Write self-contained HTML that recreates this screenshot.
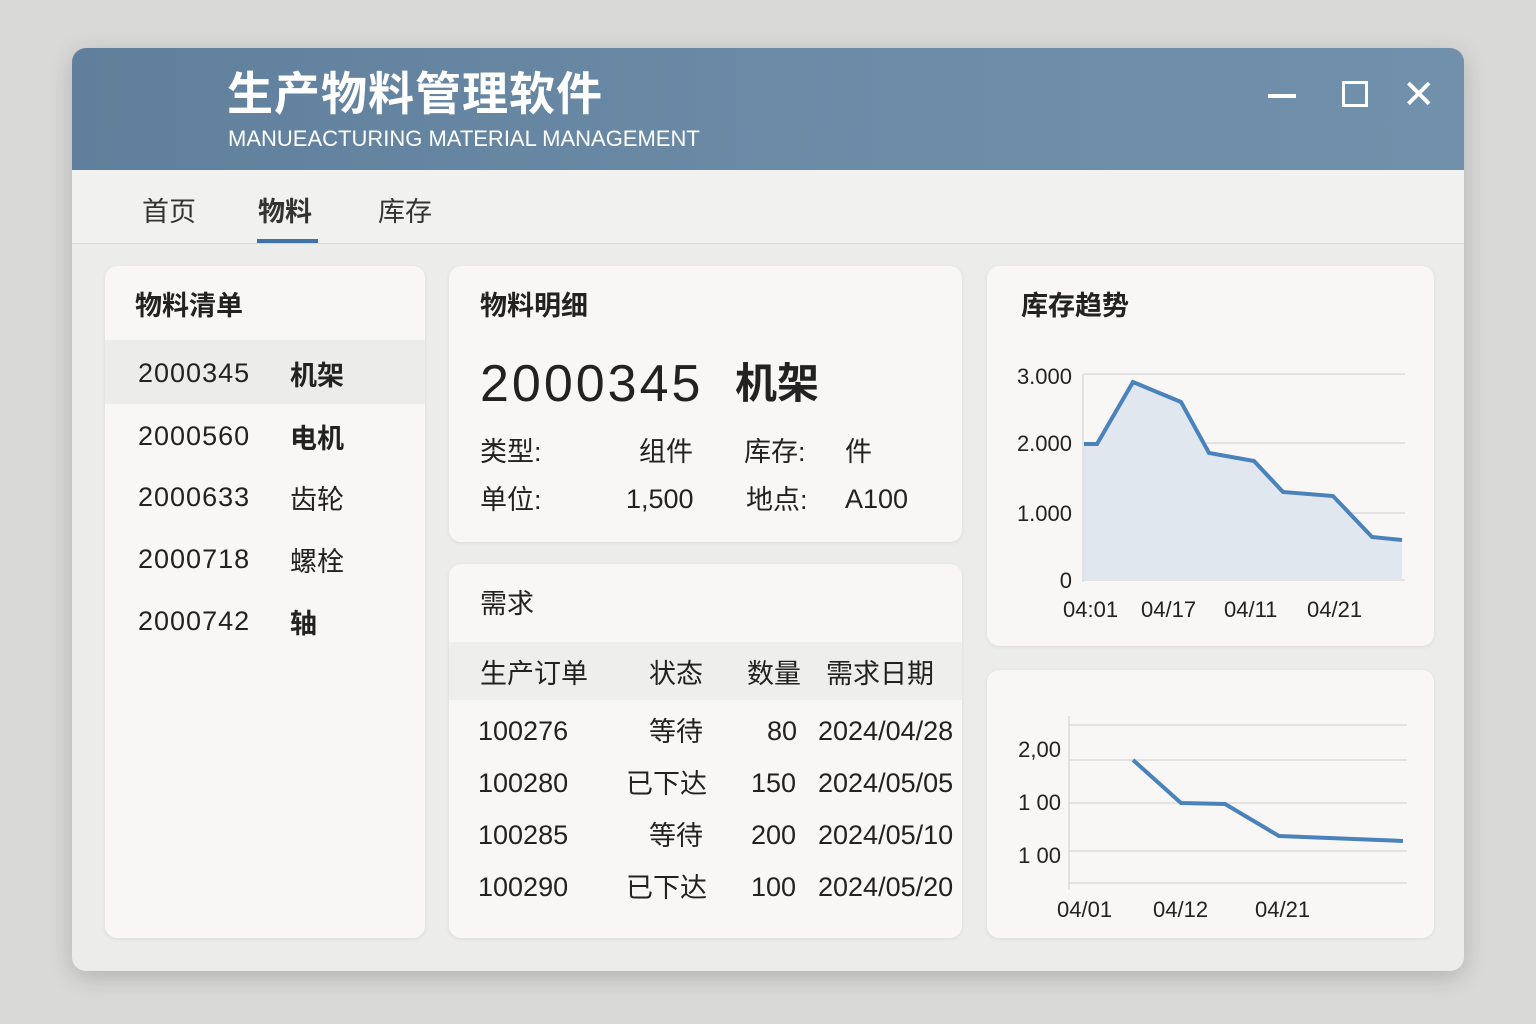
<!DOCTYPE html>
<html><head><meta charset="utf-8"><style>
body{margin:0;width:1536px;height:1024px;background:#d9d9d8;font-family:"Liberation Sans","Noto Sans CJK SC",sans-serif;position:relative;overflow:hidden;color:#222}
.win{position:absolute;left:72px;top:48px;width:1392px;height:923px;background:#ececeb;border-radius:14px;overflow:hidden;box-shadow:0 6px 24px rgba(0,0,0,.18)}
.hdr{position:absolute;left:0;top:0;width:1392px;height:122px;background:linear-gradient(90deg,#5f7f9c,#6c8ca8 60%,#7190ab)}
.t1{position:absolute;left:155px;top:10px;font-size:46px;font-weight:bold;color:#fff;letter-spacing:1px}
.t2{position:absolute;left:156px;top:78px;font-size:22px;color:#fff}
.tabs{position:absolute;left:0;top:122px;width:1392px;height:73px;background:#f1f1f0;border-bottom:1px solid #d6d6d6}
.tab{position:absolute;top:20px;font-size:27px;color:#333}
.card{position:absolute;background:#f8f7f5;border-radius:12px;box-shadow:0 1px 4px rgba(0,0,0,.08)}
.a{position:absolute;font-size:27px;color:#222;white-space:nowrap}
.n{letter-spacing:1px}
.c{transform:translateY(-4px)}
.b{font-weight:bold}
</style></head><body>
<div class="win">
<div class="hdr">
<div class="t1">生产物料管理软件</div>
<div class="t2">MANUEACTURING MATERIAL MANAGEMENT</div>
<div style="position:absolute;left:1196px;top:46px;width:28px;height:4px;background:#fff"></div>
<div style="position:absolute;left:1270px;top:33px;width:20px;height:20px;border:3px solid #fff"></div>
<div style="position:absolute;left:1330px;top:24px;font-size:40px;color:#fff">✕</div>
</div>
<div class="tabs">
<div class="tab" style="left:70px">首页</div>
<div class="tab b" style="left:186px">物料</div>
<div class="tab" style="left:306px">库存</div>
<div style="position:absolute;left:185px;top:69px;width:61px;height:4px;background:#3f73a8"></div>
</div>
</div>
<div class="card" style="left:105px;top:266px;width:320px;height:672px">
<div class="a b c" style="left:30px;top:22px">物料清单</div>
<div style="position:absolute;left:0;top:74px;width:320px;height:64px;background:#ececeb"></div>
<div class="a n" style="left:33px;top:92px">2000345</div><div class="a b c" style="left:185px;top:92px">机架</div>
<div class="a n" style="left:33px;top:155px">2000560</div><div class="a b c" style="left:185px;top:155px">电机</div>
<div class="a n" style="left:33px;top:216px">2000633</div><div class="a c" style="left:185px;top:216px">齿轮</div>
<div class="a n" style="left:33px;top:278px">2000718</div><div class="a c" style="left:185px;top:278px">螺栓</div>
<div class="a n" style="left:33px;top:340px">2000742</div><div class="a b c" style="left:185px;top:340px">轴</div>
</div>
<div class="card" style="left:449px;top:266px;width:513px;height:276px">
<div class="a b c" style="left:31px;top:22px">物料明细</div>
<div class="a" style="left:31px;top:88px;font-size:52px;letter-spacing:3px">2000345</div>
<div class="a b" style="left:286px;top:84px;font-size:42px">机架</div>
<div class="a c" style="left:31px;top:168px">类型:</div><div class="a c" style="left:190px;top:168px">组件</div>
<div class="a c" style="left:295px;top:168px">库存:</div><div class="a c" style="left:396px;top:168px">件</div>
<div class="a c" style="left:31px;top:216px">单位:</div><div class="a" style="left:177px;top:218px">1,500</div>
<div class="a c" style="left:297px;top:216px">地点:</div><div class="a" style="left:396px;top:218px">A100</div>
</div>
<div class="card" style="left:449px;top:564px;width:513px;height:374px">
<div class="a c" style="left:31px;top:22px">需求</div>
<div style="position:absolute;left:0;top:78px;width:513px;height:58px;background:#eeeeed"></div>
<div class="a c" style="left:31px;top:92px">生产订单</div><div class="a c" style="left:200px;top:92px">状态</div>
<div class="a c" style="left:298px;top:92px">数量</div><div class="a c" style="left:377px;top:92px">需求日期</div>
<div class="a" style="left:29px;top:152px">100276</div><div class="a c" style="left:200px;top:150px">等待</div><div class="a" style="left:318px;top:152px">80</div><div class="a" style="left:369px;top:152px">2024/04/28</div>
<div class="a" style="left:29px;top:204px">100280</div><div class="a c" style="left:177px;top:202px">已下达</div><div class="a" style="left:302px;top:204px">150</div><div class="a" style="left:369px;top:204px">2024/05/05</div>
<div class="a" style="left:29px;top:256px">100285</div><div class="a c" style="left:200px;top:254px">等待</div><div class="a" style="left:302px;top:256px">200</div><div class="a" style="left:369px;top:256px">2024/05/10</div>
<div class="a" style="left:29px;top:308px">100290</div><div class="a c" style="left:177px;top:306px">已下达</div><div class="a" style="left:302px;top:308px">100</div><div class="a" style="left:369px;top:308px">2024/05/20</div>
</div>
<div class="card" style="left:987px;top:266px;width:447px;height:380px">
<div class="a b c" style="left:34px;top:22px">库存趋势</div>
</div>
<div class="card" style="left:987px;top:670px;width:447px;height:268px"></div>
<svg width="1536" height="1024" style="position:absolute;left:0;top:0" font-family="Liberation Sans" font-size="22" fill="#222">
<g stroke="#dcdcdc" stroke-width="1.5">
<line x1="1083" y1="374" x2="1405" y2="374"/><line x1="1083" y1="443" x2="1405" y2="443"/><line x1="1083" y1="513" x2="1405" y2="513"/>
<line x1="1083" y1="580" x2="1405" y2="580"/><line x1="1083" y1="374" x2="1083" y2="582"/>
<line x1="1069" y1="725" x2="1407" y2="725"/><line x1="1069" y1="760" x2="1407" y2="760"/><line x1="1069" y1="803" x2="1407" y2="803"/><line x1="1069" y1="851" x2="1407" y2="851"/><line x1="1069" y1="883" x2="1407" y2="883"/><line x1="1069" y1="716" x2="1069" y2="890"/>
</g>
<path d="M1084 444L1097 444L1133 382L1181 402L1209 453L1254 461L1283 492L1333 496L1372 537L1402 540L1402 580L1084 580Z" fill="#e1e7ee"/>
<path d="M1084 444L1097 444L1133 382L1181 402L1209 453L1254 461L1283 492L1333 496L1372 537L1402 540" fill="none" stroke="#4a82bb" stroke-width="4"/>
<path d="M1133 760L1181 803L1225 804L1279 836L1403 841" fill="none" stroke="#4a82bb" stroke-width="4"/>
<g text-anchor="end"><text x="1072" y="384">3.000</text><text x="1072" y="451">2.000</text><text x="1072" y="521">1.000</text><text x="1072" y="588">0</text>
<text x="1061" y="757">2,00</text><text x="1061" y="810">1 00</text><text x="1061" y="863">1 00</text></g>
<text x="1063" y="617">04:01</text><text x="1141" y="617">04/17</text><text x="1224" y="617">04/11</text><text x="1307" y="617">04/21</text>
<text x="1057" y="917">04/01</text><text x="1153" y="917">04/12</text><text x="1255" y="917">04/21</text>
</svg>
</body></html>
